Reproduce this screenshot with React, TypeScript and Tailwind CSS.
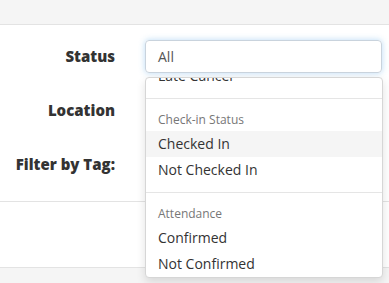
import React from "react";

export default function App() {
  const font = { fontFamily: '"Open Sans", "Noto Sans", sans-serif' };
  return (
    <div className="relative w-[389px] h-[283px] overflow-hidden bg-[#f5f5f5]" style={font}>
      <div className="h-[25px] border-b border-[#e3e3e3]" />
      <div className="bg-white border-b border-[#e3e3e3] h-[243px] flex flex-col">
        <div className="flex flex-col gap-[20px] pt-[14px]">
          <div className="flex items-center h-[34px]">
            <label className="w-[115px] text-right text-[15px] font-extrabold text-[#333]">Status</label>
            <div className="ml-[30px] w-[237px] h-[33px] border border-[#c9d3dd] rounded-[4px] shadow-[0_0_6px_rgba(102,175,233,0.45)] flex items-center px-[12px] text-[14px] text-[#555]">
              All
            </div>
          </div>
          <div className="flex items-center h-[34px]">
            <label className="w-[115px] text-right text-[15px] font-extrabold text-[#333]">Location</label>
          </div>
          <div className="flex items-center h-[34px]">
            <label className="w-[115px] text-right text-[15px] font-extrabold text-[#333]">Filter by Tag:</label>
          </div>
        </div>
        <div className="mt-[20px] border-t border-[#e3e3e3]" />
      </div>

      <div className="absolute left-[145px] top-[77px] w-[238px] h-[201px] bg-white border border-[#d6d6d6] rounded-[4px] shadow-[0_4px_10px_rgba(0,0,0,0.12)] overflow-hidden text-[14px] leading-[20px] text-[#333]">
        <div className="-mt-[15px]">
          <div className="px-[12px] py-[3px]">Late Cancel</div>
          <div className="my-[9px] h-px bg-[#e5e5e5]" />
          <div className="px-[12px] py-[3px] text-[12px] leading-[17px] text-[#777]">Check-in Status</div>
          <div className="px-[12px] py-[3px] bg-[#f5f5f5]">Checked In</div>
          <div className="px-[12px] py-[3px]">Not Checked In</div>
          <div className="my-[9px] h-px bg-[#e5e5e5]" />
          <div className="px-[12px] py-[3px] text-[12px] leading-[17px] text-[#777]">Attendance</div>
          <div className="px-[12px] py-[3px]">Confirmed</div>
          <div className="px-[12px] py-[3px]">Not Confirmed</div>
        </div>
      </div>
    </div>
  );
}
